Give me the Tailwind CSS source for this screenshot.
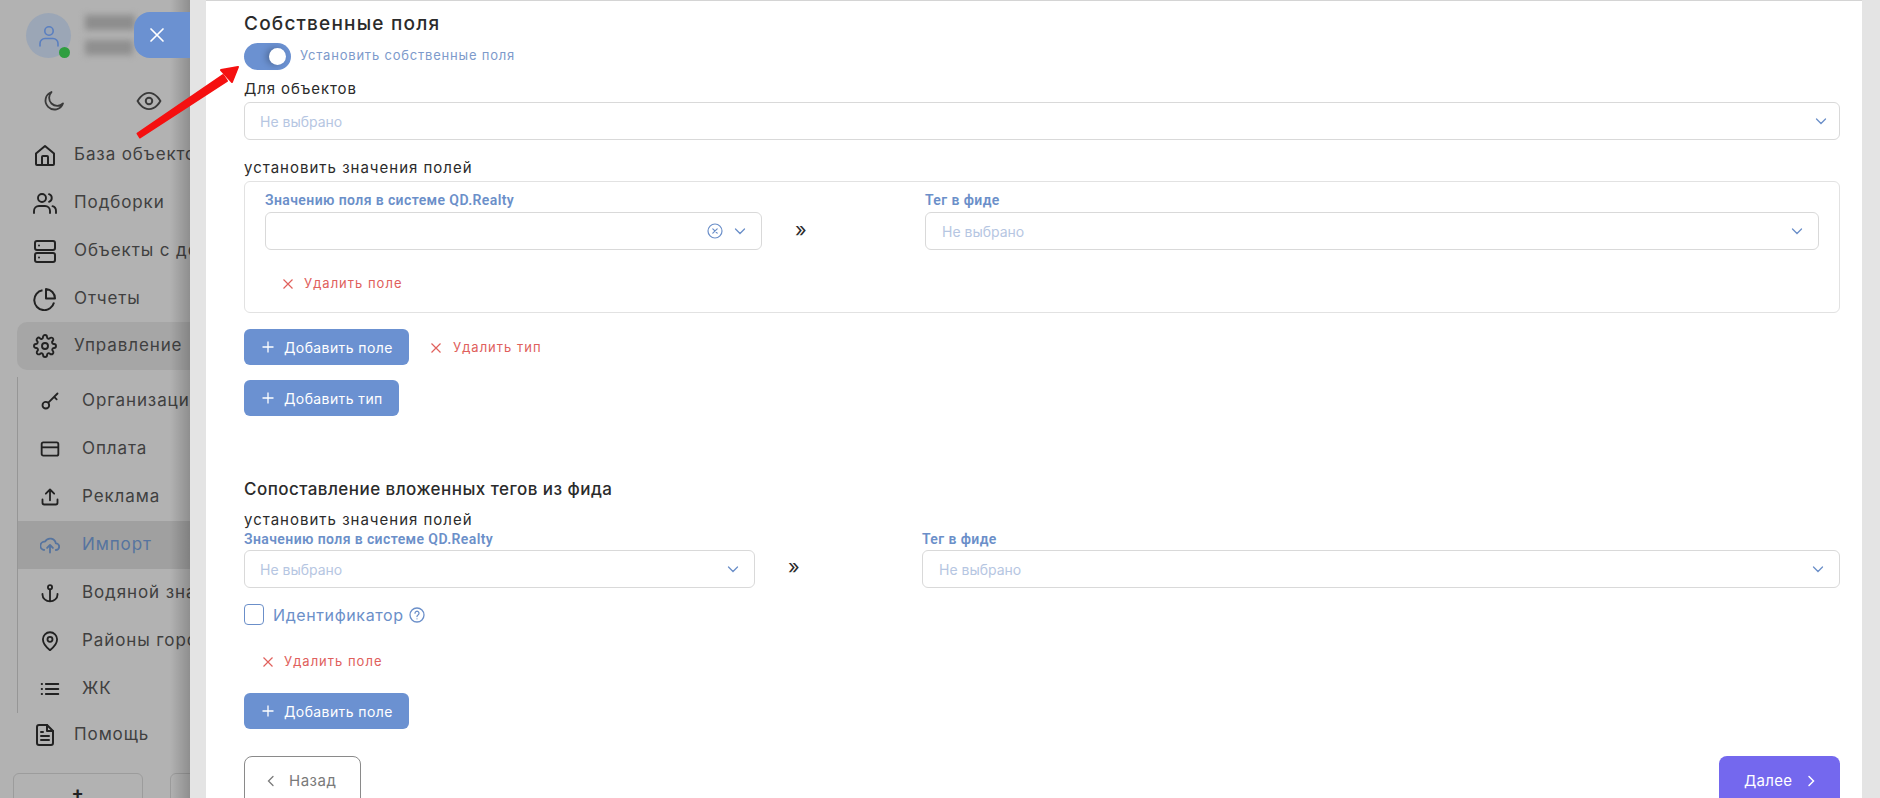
<!DOCTYPE html>
<html lang="ru">

<head>
  <meta charset="UTF-8">
  <title>Импорт</title>
  <script src="https://cdn.jsdelivr.net/npm/@tailwindcss/browser@4"></script>
</head>

<body class="bg-[#b2b2b2] font-['Inter','Liberation_Sans',sans-serif]">
  <div class="relative flex h-[798px] w-[1880px] overflow-hidden">

    <!-- Sidebar under the overlay -->
    <aside class="relative w-[190px] shrink-0 overflow-hidden whitespace-nowrap bg-[#b2b2b2] text-[17px] tracking-[0.9px] text-[#404040]">
      <div class="flex h-[70px] items-start pl-[26px] pt-[13px]">
        <div class="relative flex h-[45px] w-[45px] items-center justify-center rounded-full bg-[#9ba6b6]">
          <svg class="h-[24px] w-[24px] text-[#5a7fc0]" viewBox="0 0 24 24" fill="none" stroke="currentColor" stroke-width="1.6" stroke-linecap="round"><circle cx="12" cy="7" r="4.2"/><path d="M3 22v-2.5a5 5 0 0 1 5-5h8a5 5 0 0 1 5 5V22"/></svg>
          <span class="absolute left-[33px] top-[34px] h-[11px] w-[11px] rounded-full bg-[#2f9e3f]"></span>
        </div>
        <div class="ml-[14px] mt-[2px] flex flex-col gap-[10px] blur-[3px]">
          <div class="h-[15px] w-[50px] bg-[#8d8d8d]"></div>
          <div class="h-[15px] w-[48px] bg-[#8f8f8f]"></div>
        </div>
      </div>
      <div class="flex h-[62px] items-center pl-[42px] text-[#3a3a3a]">
        <svg class="h-[24px] w-[24px]" viewBox="0 0 24 24" fill="none" stroke="currentColor" stroke-width="1.8" stroke-linecap="round" stroke-linejoin="round"><path d="M21 14.5A9 9 0 1 1 9.5 3a7.5 7.5 0 0 0 11.5 11.5z"/></svg>
        <svg class="ml-[70px] h-[26px] w-[26px]" viewBox="0 0 24 24" fill="none" stroke="currentColor" stroke-width="1.8"><path d="M1.5 12S5.5 4.5 12 4.5 22.500 12 22.500 12 18.500 19.500 12 19.500 1.500 12 1.500 12z"/><circle cx="12" cy="12" r="3"/></svg>
      </div>

      <nav class="mt-[-2px] flex flex-col">
        <a class="flex h-[48px] items-center pl-[33px] pt-[2px]">
          <svg class="h-[24px] w-[24px] shrink-0 text-[#222]" viewBox="0 0 24 24" fill="none" stroke="currentColor" stroke-width="2" stroke-linejoin="round"><path d="M3 10.500 12 3l9 7.500V21a1 1 0 0 1-1 1H4a1 1 0 0 1-1-1z"/><path d="M9 22v-8a1 1 0 0 1 1-1h4a1 1 0 0 1 1 1v8"/></svg>
          <span class="ml-[17px]">База объектов</span>
        </a>
        <a class="flex h-[48px] items-center pl-[33px] pt-[2px]">
          <svg class="h-[24px] w-[24px] shrink-0 text-[#222]" viewBox="0 0 24 24" fill="none" stroke="currentColor" stroke-width="1.900" stroke-linecap="round"><circle cx="9" cy="7" r="4"/><path d="M1 22v-2a5 5 0 0 1 5-5h6a5 5 0 0 1 5 5v2"/><path d="M16 3.200a4 4 0 0 1 0 7.600"/><path d="M19.500 15.200A5 5 0 0 1 23 20v2"/></svg>
          <span class="ml-[17px]">Подборки</span>
        </a>
        <a class="flex h-[48px] items-center pl-[33px] pt-[2px]">
          <svg class="h-[24px] w-[24px] shrink-0 text-[#222]" viewBox="0 0 24 24" fill="none" stroke="currentColor" stroke-width="2" stroke-linecap="round"><rect x="2" y="2" width="20" height="9" rx="2"/><rect x="2" y="14" width="20" height="9" rx="2"/><path d="M6 6.500h.01M6 18.500h.01"/></svg>
          <span class="ml-[17px]">Объекты с доступом</span>
        </a>
        <a class="flex h-[48px] items-center pl-[33px] pt-[2px]">
          <svg class="h-[24px] w-[24px] shrink-0 text-[#222]" viewBox="0 0 24 24" fill="none" stroke="currentColor" stroke-width="2" stroke-linejoin="round"><path d="M21 15.500A10 10 0 1 1 9.500 3.300"/><path d="M13 2a9.500 9.500 0 0 1 9 9.500h-9z"/></svg>
          <span class="ml-[17px]">Отчеты</span>
        </a>
        <a class="ml-[17px] flex h-[48px] items-center rounded-l-[10px] bg-[#a6a6a6] pl-[16px]">
          <svg class="h-[24px] w-[24px] shrink-0 text-[#222]" viewBox="0 0 24 24" fill="none" stroke="currentColor" stroke-width="1.900" stroke-linecap="round" stroke-linejoin="round"><circle cx="12" cy="12" r="3"/><path d="M19.400 15a1.650 1.650 0 0 0 .33 1.820l.06.06a2 2 0 1 1-2.830 2.830l-.06-.06a1.650 1.650 0 0 0-2.820 1.170V21a2 2 0 0 1-4 0v-.09A1.650 1.650 0 0 0 7.260 19.740l-.06.06a2 2 0 1 1-2.830-2.830l.06-.06A1.650 1.650 0 0 0 3.260 14H3a2 2 0 0 1 0-4h.09A1.650 1.650 0 0 0 4.260 7.200l-.06-.06a2 2 0 1 1 2.830-2.830l.06.06A1.650 1.650 0 0 0 10 3.260V3a2 2 0 0 1 4 0v.09a1.650 1.650 0 0 0 2.800 1.170l.06-.06a2 2 0 1 1 2.830 2.830l-.06.06A1.650 1.650 0 0 0 20.740 10H21a2 2 0 0 1 0 4h-.09a1.650 1.650 0 0 0-1.510 1z"/></svg>
          <span class="ml-[17px]">Управление</span>
        </a>

        <div class="ml-[17px] mt-[7px] flex flex-col border-l border-[#969696]">
          <a class="flex h-[48px] items-center pl-[22px]">
            <svg class="h-[20px] w-[20px] shrink-0 text-[#222]" viewBox="0 0 24 24" fill="none" stroke="currentColor" stroke-width="2.200" stroke-linecap="round"><circle cx="7" cy="17" r="4"/><path d="M10 14 21 3M17 7l3 3"/></svg>
            <span class="ml-[22px]">Организации</span>
          </a>
          <a class="flex h-[48px] items-center pl-[22px]">
            <svg class="h-[20px] w-[20px] shrink-0 text-[#222]" viewBox="0 0 24 24" fill="none" stroke="currentColor" stroke-width="2.200"><rect x="2" y="4" width="20" height="16" rx="2"/><path d="M2 10h20"/></svg>
            <span class="ml-[22px]">Оплата</span>
          </a>
          <a class="flex h-[48px] items-center pl-[22px]">
            <svg class="h-[20px] w-[20px] shrink-0 text-[#222]" viewBox="0 0 24 24" fill="none" stroke="currentColor" stroke-width="2.200" stroke-linecap="round" stroke-linejoin="round"><path d="M3 15v4a2 2 0 0 0 2 2h14a2 2 0 0 0 2-2v-4"/><path d="M12 16V3M7 8l5-5 5 5"/></svg>
            <span class="ml-[22px]">Реклама</span>
          </a>
          <a class="flex h-[48px] items-center bg-[#a0a0a0] pl-[22px] text-[#56749f]">
            <svg class="h-[20px] w-[20px] shrink-0" viewBox="0 0 24 24" fill="none" stroke="currentColor" stroke-width="2.200" stroke-linecap="round" stroke-linejoin="round"><path d="M5 18A5 5 0 0 1 6 8a7 7 0 0 1 13 2 4 4 0 0 1 0 8"/><path d="M12 21v-9M8.500 15.500 12 12l3.500 3.500"/></svg>
            <span class="ml-[22px]">Импорт</span>
          </a>
          <a class="flex h-[48px] items-center pl-[22px]">
            <svg class="h-[20px] w-[20px] shrink-0 text-[#222]" viewBox="0 0 24 24" fill="none" stroke="currentColor" stroke-width="2.200" stroke-linecap="round" stroke-linejoin="round"><circle cx="12" cy="5" r="2.500"/><path d="M12 8v14M3 13v1a9 8 0 0 0 18 0v-1"/></svg>
            <span class="ml-[22px]">Водяной знак</span>
          </a>
          <a class="flex h-[48px] items-center pl-[22px]">
            <svg class="h-[20px] w-[20px] shrink-0 text-[#222]" viewBox="0 0 24 24" fill="none" stroke="currentColor" stroke-width="2.200" stroke-linejoin="round"><path d="M12 23s-8.500-6.500-8.500-13a8.500 8.500 0 0 1 17 0c0 6.500-8.500 13-8.500 13z"/><circle cx="12" cy="10" r="3"/></svg>
            <span class="ml-[22px]">Районы города</span>
          </a>
          <a class="flex h-[48px] items-center pl-[22px]">
            <svg class="h-[20px] w-[20px] shrink-0 text-[#222]" viewBox="0 0 24 24" fill="none" stroke="currentColor" stroke-width="2.200" stroke-linecap="round"><path d="M7 6h15M7 12h15M7 18h15M2 6h.5M2 12h.5M2 18h.5"/></svg>
            <span class="ml-[22px]">ЖК</span>
          </a>
        </div>

        <a class="flex h-[44px] items-center pl-[33px]">
          <svg class="h-[24px] w-[24px] shrink-0 text-[#222]" viewBox="0 0 24 24" fill="none" stroke="currentColor" stroke-width="2" stroke-linecap="round" stroke-linejoin="round"><path d="M14 2H6a2 2 0 0 0-2 2v16a2 2 0 0 0 2 2h12a2 2 0 0 0 2-2V8z"/><path d="M14 2v6h6M8 13h8M8 17h8M8 9h2"/></svg>
          <span class="ml-[17px]">Помощь</span>
        </a>
      </nav>

      <div class="absolute left-[13px] top-[773px] flex gap-[27px]">
        <div class="flex h-[60px] w-[130px] justify-center rounded-[6px] border border-[#9c9c9c] pt-[10px] text-[18px] font-bold leading-none text-[#222]">+</div>
        <div class="h-[60px] w-[80px] rounded-[6px] border border-[#9c9c9c]"></div>
      </div>
      <div class="absolute right-0 top-0 h-full w-[20px] bg-gradient-to-r from-transparent to-black/20"></div>
      <button class="absolute left-[134px] top-[12px] flex h-[46px] w-[56px] items-center rounded-l-[16px] bg-[#6b91d1] pl-[15px]">
        <svg class="h-[16px] w-[16px] text-white" viewBox="0 0 16 16" fill="none" stroke="currentColor" stroke-width="1.700" stroke-linecap="round"><path d="M2 2l12 12M14 2 2 14"/></svg>
      </button>
    </aside>

    <!-- Drawer -->
    <main class="flex-1 bg-[#e4e4e4] pl-[16px] pr-[18px]">
      <div class="h-full border-t border-[#d4d4d4] bg-white pl-[38px] pr-[22px] text-[#2b2b2b]">

        <div class="mt-[10px] flex h-[24px] items-center text-[19px] font-medium leading-none tracking-[1.2px]">Собственные поля</div>

        <div class="mt-[7px] flex h-[28px] items-center">
          <div class="flex h-[27px] w-[47px] items-center justify-end rounded-full bg-[#6b91d1] pr-[5px]">
            <span class="h-[17px] w-[17px] rounded-full bg-white shadow-[-3px_0_6px_rgba(0,0,0,0.25)]"></span>
          </div>
          <span class="ml-[9px] text-[13px] tracking-[0.8px] text-[#7d9acb]">Установить собственные поля</span>
        </div>

        <div class="mt-[9px] flex h-[20px] items-center text-[15px] tracking-[0.9px]">Для объектов</div>
        <div class="mt-[3px] flex h-[38px] items-center justify-between rounded-[6px] border border-[#d9d9d9] pl-[15px] pr-[12px]">
          <span class="pt-[1px] text-[14px] text-[#b6c6e2]">Не выбрано</span>
          <svg class="h-[12px] w-[12px] text-[#6b8fc9]" viewBox="0 0 12 12" fill="none" stroke="currentColor" stroke-width="1.300" stroke-linecap="round"><path d="M1.500 4 6 8.500 10.500 4"/></svg>
        </div>

        <div class="mt-[18px] flex h-[20px] items-center text-[15px] tracking-[1px]">установить значения полей</div>
        <div class="mt-[3px] h-[132px] rounded-[6px] border border-[#e2e2e2] pl-[20px] pr-[20px] pt-[10px]">
          <div class="flex">
            <div class="w-[497px] shrink-0">
              <div class="flex h-[16px] items-center font-['Roboto',sans-serif] text-[14px] font-semibold tracking-[0.4px] text-[#6b8fc9]">Значению поля в системе QD.Realty</div>
              <div class="mt-[4px] flex h-[38px] items-center justify-end gap-[11px] rounded-[6px] border border-[#d9d9d9] pr-[15px]">
                <svg class="h-[16px] w-[16px] text-[#6b8fc9]" viewBox="0 0 16 16" fill="none" stroke="currentColor" stroke-width="1.200" stroke-linecap="round"><circle cx="8" cy="8" r="7"/><path d="M5.800 5.800l4.400 4.400M10.200 5.800l-4.400 4.400"/></svg>
                <svg class="h-[12px] w-[12px] text-[#6b8fc9]" viewBox="0 0 12 12" fill="none" stroke="currentColor" stroke-width="1.300" stroke-linecap="round"><path d="M1.500 4 6 8.500 10.500 4"/></svg>
              </div>
            </div>
            <div class="flex w-[163px] shrink-0 items-center pl-[33px] pt-[17px] text-[20px] font-normal">»</div>
            <div class="flex-1">
              <div class="flex h-[16px] items-center font-['Roboto',sans-serif] text-[14px] font-semibold tracking-[0.4px] text-[#6b8fc9]">Тег в фиде</div>
              <div class="mt-[4px] flex h-[38px] items-center justify-between rounded-[6px] border border-[#d9d9d9] pl-[16px] pr-[15px]">
                <span class="pt-[1px] text-[14px] text-[#b6c6e2]">Не выбрано</span>
                <svg class="h-[12px] w-[12px] text-[#6b8fc9]" viewBox="0 0 12 12" fill="none" stroke="currentColor" stroke-width="1.300" stroke-linecap="round"><path d="M1.500 4 6 8.500 10.500 4"/></svg>
              </div>
            </div>
          </div>
          <div class="ml-[18px] mt-[24px] flex h-[20px] items-center gap-[11px] text-[13px] tracking-[1px] text-[#e0605c]">
            <svg class="h-[10px] w-[10px]" viewBox="0 0 10 10" fill="none" stroke="currentColor" stroke-width="1.200"><path d="M.5.500l9 9M9.500.500l-9 9"/></svg>
            Удалить поле
          </div>
        </div>

        <div class="mt-[16px] flex h-[36px] items-center">
          <button class="flex h-[36px] w-[165px] items-center rounded-[6px] bg-[#6b91d1] pl-[18px] text-[14px] tracking-[0.4px] text-white">
            <svg class="h-[12px] w-[12px]" viewBox="0 0 12 12" fill="none" stroke="currentColor" stroke-width="1.300"><path d="M6 .5v11M.5 6h11"/></svg>
            <span class="ml-[10px]">Добавить поле</span>
          </button>
          <div class="ml-[22px] mt-[2px] flex items-center gap-[12px] text-[13px] tracking-[1px] text-[#e0605c]">
            <svg class="h-[10px] w-[10px]" viewBox="0 0 10 10" fill="none" stroke="currentColor" stroke-width="1.200"><path d="M.5.500l9 9M9.500.500l-9 9"/></svg>
            Удалить тип
          </div>
        </div>
        <button class="mt-[15px] flex h-[36px] w-[155px] items-center rounded-[6px] bg-[#6b91d1] pl-[18px] text-[14px] tracking-[0.4px] text-white">
          <svg class="h-[12px] w-[12px]" viewBox="0 0 12 12" fill="none" stroke="currentColor" stroke-width="1.300"><path d="M6 .5v11M.5 6h11"/></svg>
          <span class="ml-[10px]">Добавить тип</span>
        </button>

        <div class="mt-[62px] flex h-[24px] items-center text-[17px] font-medium tracking-[0.45px]">Сопоставление вложенных тегов из фида</div>
        <div class="mt-[8px] flex h-[20px] items-center text-[15px] tracking-[1px]">установить значения полей</div>
        <div class="mt-[1px] flex">
          <div class="w-[511px] shrink-0">
            <div class="flex h-[16px] items-center font-['Roboto',sans-serif] text-[14px] font-semibold tracking-[0.4px] text-[#6b8fc9]">Значению поля в системе QD.Realty</div>
            <div class="mt-[3px] flex h-[38px] items-center justify-between rounded-[6px] border border-[#d9d9d9] pl-[15px] pr-[15px]">
              <span class="pt-[1px] text-[14px] text-[#b6c6e2]">Не выбрано</span>
              <svg class="h-[12px] w-[12px] text-[#6b8fc9]" viewBox="0 0 12 12" fill="none" stroke="currentColor" stroke-width="1.300" stroke-linecap="round"><path d="M1.500 4 6 8.500 10.500 4"/></svg>
            </div>
          </div>
          <div class="flex w-[167px] shrink-0 items-center pl-[33px] pt-[14px] text-[20px] font-normal">»</div>
          <div class="flex-1">
            <div class="flex h-[16px] items-center font-['Roboto',sans-serif] text-[14px] font-semibold tracking-[0.4px] text-[#6b8fc9]">Тег в фиде</div>
            <div class="mt-[3px] flex h-[38px] items-center justify-between rounded-[6px] border border-[#d9d9d9] pl-[16px] pr-[15px]">
              <span class="pt-[1px] text-[14px] text-[#b6c6e2]">Не выбрано</span>
              <svg class="h-[12px] w-[12px] text-[#6b8fc9]" viewBox="0 0 12 12" fill="none" stroke="currentColor" stroke-width="1.300" stroke-linecap="round"><path d="M1.500 4 6 8.500 10.500 4"/></svg>
            </div>
          </div>
        </div>

        <div class="mt-[16px] flex h-[21px] items-center">
          <span class="h-[21px] w-[20px] rounded-[4px] border border-[#6b8fc9]"></span>
          <span class="ml-[9px] text-[16px] tracking-[0.6px] text-[#6b8fc9]">Идентификатор</span>
          <svg class="ml-[5px] h-[16px] w-[16px] text-[#6b8fc9]" viewBox="0 0 16 16" fill="none" stroke="currentColor" stroke-width="1.300" stroke-linecap="round"><circle cx="8" cy="8" r="7"/><path d="M6 6.200a2 2 0 1 1 3 1.800c-.7.400-1 .8-1 1.500M8 11.800h.01"/></svg>
        </div>

        <div class="ml-[19px] mt-[27px] flex h-[20px] items-center gap-[11px] text-[13px] tracking-[1px] text-[#e0605c]">
          <svg class="h-[10px] w-[10px]" viewBox="0 0 10 10" fill="none" stroke="currentColor" stroke-width="1.200"><path d="M.5.500l9 9M9.500.500l-9 9"/></svg>
          Удалить поле
        </div>
        <button class="mt-[21px] flex h-[36px] w-[165px] items-center rounded-[6px] bg-[#6b91d1] pl-[18px] text-[14px] tracking-[0.4px] text-white">
          <svg class="h-[12px] w-[12px]" viewBox="0 0 12 12" fill="none" stroke="currentColor" stroke-width="1.300"><path d="M6 .5v11M.5 6h11"/></svg>
          <span class="ml-[10px]">Добавить поле</span>
        </button>

        <div class="mt-[27px] flex justify-between">
          <button class="flex h-[50px] w-[117px] items-center rounded-[8px] border border-[#8a8a8a] pl-[20px] text-[15px] tracking-[0.5px] text-[#7a7a7a]">
            <svg class="h-[12px] w-[12px]" viewBox="0 0 12 12" fill="none" stroke="currentColor" stroke-width="1.300" stroke-linecap="round"><path d="M8 1.500 3.500 6 8 10.500"/></svg>
            <span class="ml-[12px]">Назад</span>
          </button>
          <button class="flex h-[50px] w-[121px] items-center rounded-[8px] bg-[#7468ee] pl-[25px] text-[15px] tracking-[0.3px] text-white">
            Далее
            <svg class="ml-[13px] h-[12px] w-[12px]" viewBox="0 0 12 12" fill="none" stroke="currentColor" stroke-width="1.500" stroke-linecap="round"><path d="M4 1.500 8.500 6 4 10.500"/></svg>
          </button>
        </div>
      </div>
    </main>

    <!-- Red annotation arrow -->
    <svg class="absolute left-0 top-0 h-[798px] w-[1880px]" viewBox="0 0 1880 798" fill="none">
      <path d="M137.500 133.500 L140 137.500 L227 81 L223 75 Z" fill="#f51010" stroke="#f51010" stroke-width="2" stroke-linejoin="round"/>
      <path d="M238 67 L221 70 L232 82 Z" fill="#f51010" stroke="#f51010" stroke-width="2" stroke-linejoin="round"/>
    </svg>
  </div>
</body>

</html>
